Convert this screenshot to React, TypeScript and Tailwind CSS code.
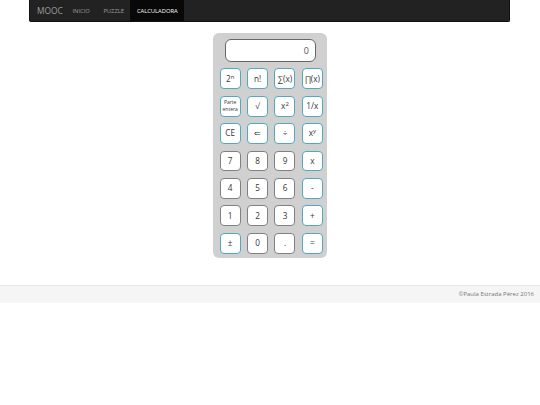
const F = { fontFamily: '"Open Sans", sans-serif' };

type K = { t: React.ReactNode; blue?: boolean };
const sup = (a: string, b: string) => (
  <span>
    {a}
    <sup className="text-[6px] leading-none">{b}</sup>
  </span>
);
const keys: K[] = [
  { t: sup("2", "n"), blue: true },
  { t: "n!", blue: true },
  { t: "∑(x)", blue: true },
  { t: "∏(x)", blue: true },
  { t: <span className="block text-[5px] leading-[7px]">Parte<br />entera</span>, blue: true },
  { t: "√", blue: true },
  { t: sup("x", "2"), blue: true },
  { t: "1/x", blue: true },
  { t: "CE", blue: true },
  { t: "⇐", blue: true },
  { t: "÷", blue: true },
  { t: sup("x", "y"), blue: true },
  { t: "7" }, { t: "8" }, { t: "9" }, { t: "x", blue: true },
  { t: "4" }, { t: "5" }, { t: "6" }, { t: "-", blue: true },
  { t: "1" }, { t: "2" }, { t: "3" }, { t: "+", blue: true },
  { t: "±", blue: true }, { t: "0" }, { t: "." }, { t: "=", blue: true },
];

export default function App() {
  return (
    <div className="w-[540px] h-[405px] bg-white flex flex-col overflow-hidden antialiased" style={F}>
      <nav className="ml-[29.3px] w-[481px] h-[22px] shrink-0 bg-[#222222] border border-t-0 border-[#111111] rounded-b-[2px] flex items-stretch pl-[6.7px] text-[5.8px]">
        <span className="w-[23.5px] pt-[1px] whitespace-nowrap text-[8.4px] text-[#9d9d9d] flex items-center mr-[6px]">MOOC</span>
        <span className="text-[#9d9d9d] flex items-center pt-[1px] pl-[6px] pr-[7px]">INICIO</span>
        <span className="text-[#9d9d9d] flex items-center pt-[1px] px-[6.5px]">PUZZLE</span>
        <span className="text-white bg-[#080808] flex items-center pt-[1px] px-[6.4px]">CALCULADORA</span>
      </nav>

      <main className="mt-[10.5px] ml-[213.3px] w-[113.5px] h-[225px] shrink-0 bg-[#d0d0d0] rounded-[6px] flex flex-col items-start pt-[6.5px] pl-[6.4px]">
        <div className="ml-[5.3px] w-[91px] h-[22.7px] bg-white border-[1.3px] border-[#666666] rounded-[6px] flex items-center justify-end pr-[6px] text-[9px] text-[#555555]">
          0
        </div>
        <div className="mt-[6.7px] grid grid-cols-[repeat(4,21px)] auto-rows-[20.8px] gap-x-[6.4px] gap-y-[6.6px]">
          {keys.map((k, i) => (
            <button
              key={i}
              className={
                "bg-white rounded-[4px] border-[1.5px] flex items-center justify-center text-[8.2px] text-[#333333] leading-none " +
                (k.blue ? "border-[#5ba5b8] shadow-[0_0_1px_#a8dcea]" : "border-[#808080]")
              }
            >
              {k.t}
            </button>
          ))}
        </div>
      </main>

      <footer className="mt-[27.5px] h-[18px] shrink-0 bg-[#f5f5f5] border-t border-[#e7e7e7] flex items-center justify-end pr-[6px] text-[6px] text-[#777777]">
        ©Paula Estrada Pérez 2016
      </footer>
    </div>
  );
}
